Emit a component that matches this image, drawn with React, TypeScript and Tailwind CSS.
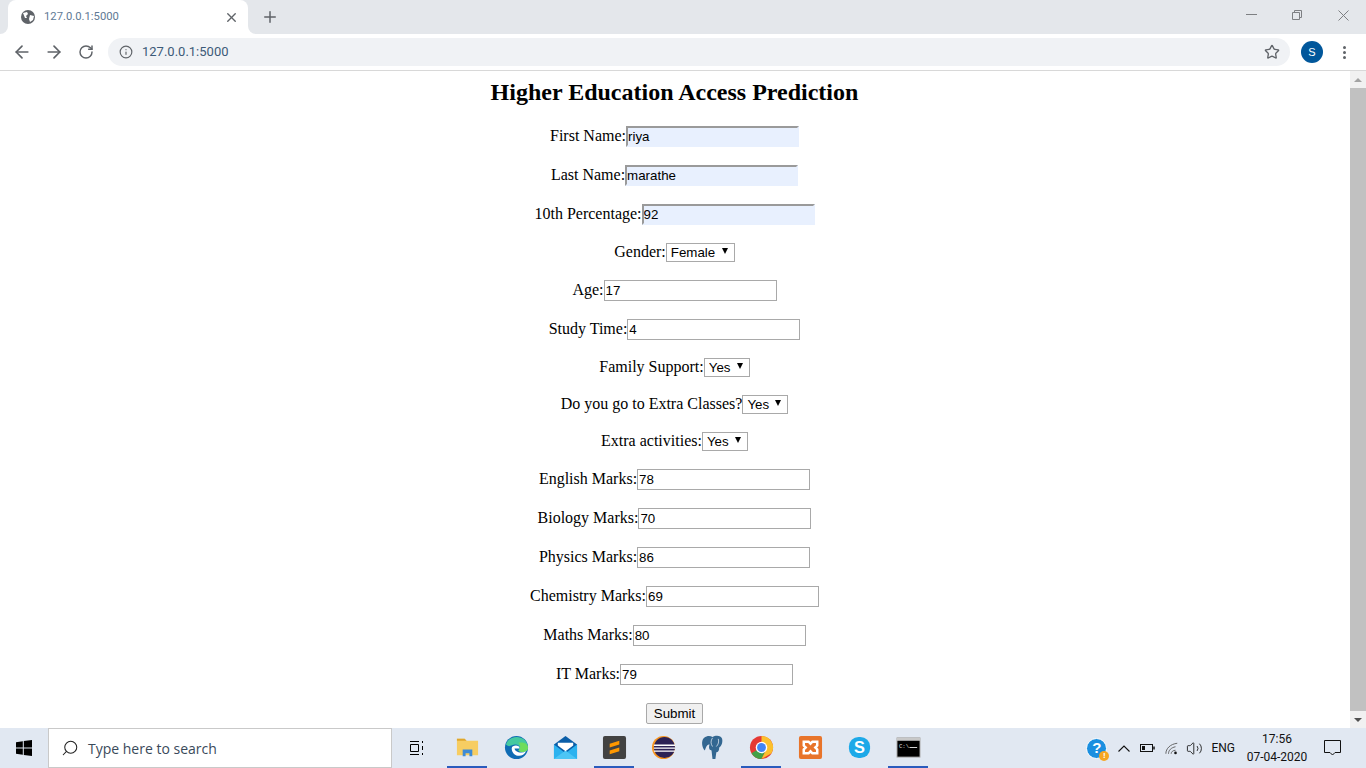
import { ArrowLeft, ArrowRight, RotateCw, Info, Star, X, Plus, Search, Volume2 } from 'lucide-react';

const formRows = [
  { label: 'First Name:', value: 'riya', kind: 'auto' },
  { label: 'Last Name:', value: 'marathe', kind: 'auto' },
  { label: '10th Percentage:', value: '92', kind: 'auto' },
  { label: 'Gender:', value: 'Female', kind: 'select' },
  { label: 'Age:', value: '17', kind: 'text' },
  { label: 'Study Time:', value: '4', kind: 'text' },
  { label: 'Family Support:', value: 'Yes', kind: 'select' },
  { label: 'Do you go to Extra Classes?', value: 'Yes', kind: 'select' },
  { label: 'Extra activities:', value: 'Yes', kind: 'select' },
  { label: 'English Marks:', value: '78', kind: 'text' },
  { label: 'Biology Marks:', value: '70', kind: 'text' },
  { label: 'Physics Marks:', value: '86', kind: 'text' },
  { label: 'Chemistry Marks:', value: '69', kind: 'text' },
  { label: 'Maths Marks:', value: '80', kind: 'text' },
  { label: 'IT Marks:', value: '79', kind: 'text' },
];

const Field = ({ kind, value }: { kind: string; value: string }) => {
  if (kind === 'select') {
    return (
      <div className="relative flex">
        <select
          defaultValue={value}
          className={`appearance-none h-[19px] pl-[4px] border border-[#a9a9a9] bg-white text-[13.33px] leading-[15px] text-black font-['Liberation_Sans',sans-serif] ${value === 'Female' ? 'w-[69px]' : 'w-[46px]'}`}
        >
          <option>{value}</option>
        </select>
        {/* dropdown arrow */}
        <span className="absolute right-[7px] top-[5px] w-0 h-0 border-x-[3px] border-x-transparent border-t-[6px] border-t-black pointer-events-none" />
      </div>
    );
  }
  const look = kind === 'auto'
    ? 'bg-[#e8f0fe] border-2 border-t-[#9a9a9a] border-l-[#9a9a9a] border-r-[#e8f0fe] border-b-[#e8f0fe] px-0'
    : 'bg-white border border-[#a9a9a9] px-[1px]';
  return (
    <input
      readOnly
      value={value}
      className={`w-[173px] h-[21px] text-[13.33px] text-black font-['Liberation_Sans',sans-serif] outline-none ${look}`}
    />
  );
};

const Logo = ({ children, active }: { children: React.ReactNode; active?: boolean }) => (
  <div className={`w-[40px] h-[40px] mr-[9px] flex items-center justify-center border-b-2 ${active ? 'border-[#2a5bbd]' : 'border-transparent'}`}>
    <svg width="25" height="25" viewBox="0 0 26 26">{children}</svg>
  </div>
);

export default function App() {
  return (
    <div className="h-screen w-full overflow-hidden flex flex-col bg-white">
      {/* tab strip */}
      <div className="h-[34px] shrink-0 bg-[#e4e7eb] flex items-end font-['Roboto','Liberation_Sans',sans-serif]">
        <div className="relative ml-2 w-[240px] h-[34px] bg-white rounded-t-lg flex items-center pl-[13px] pr-[9px]">
          {/* tab flares */}
          <div className="absolute -left-2 bottom-0 w-2 h-2 bg-white"><div className="w-full h-full bg-[#e4e7eb] rounded-br-lg" /></div>
          <div className="absolute -right-2 bottom-0 w-2 h-2 bg-white"><div className="w-full h-full bg-[#e4e7eb] rounded-bl-lg" /></div>
          <svg width="14" height="14" viewBox="0 0 14 14" className="shrink-0">
            <circle cx="7" cy="7" r="7" fill="#5f6368" />
            <path d="M2 3 L6 2 L7 4 L5 6 L6 8 L4 8 Z M9 5 L13 6 L12 10 L9 12 L8 9 Z" fill="#fff" />
          </svg>
          <span className="ml-[9px] text-[11.25px] text-[#5f7a95] flex-1">127.0.0.1:5000</span>
          <X size={15} className="text-[#5f6368]" strokeWidth={2.2} />
        </div>
        <Plus size={18} className="ml-[13px] mb-[8px] text-[#5f6368]" strokeWidth={2} />
        <div className="ml-auto flex items-center h-full text-[#7d7f82]">
          <div className="w-[46px] h-[30px] mb-[4px] flex items-center justify-center">
            <svg width="11" height="10" viewBox="0 0 11 10" fill="none" stroke="currentColor"><path d="M0 4.5h11" /></svg>
          </div>
          <div className="w-[46px] h-[30px] mb-[4px] flex items-center justify-center">
            <svg width="10" height="10" viewBox="0 0 10 10" fill="none" stroke="currentColor"><path d="M.5 2.5h7v7h-7zM2.5 2.5v-2h7v7h-2" /></svg>
          </div>
          <div className="w-[46px] h-[30px] mb-[4px] flex items-center justify-center">
            <svg width="11" height="11" viewBox="0 0 11 11" fill="none" stroke="currentColor"><path d="M.5.5l10 10M10.5.5l-10 10" /></svg>
          </div>
        </div>
      </div>

      {/* toolbar */}
      <div className="h-[37px] shrink-0 bg-white border-b border-[#d8d8d8] flex items-center">
        <ArrowLeft size={20} className="ml-[12px] text-[#5f6368]" strokeWidth={2} />
        <ArrowRight size={20} className="ml-[12px] text-[#5f6368]" strokeWidth={2} />
        <RotateCw size={16} className="ml-[14px] text-[#5f6368]" strokeWidth={2.2} />
        <div className="ml-[14px] w-[1182px] h-[28px] rounded-full bg-[#f0f2f5] flex items-center pl-[11px] pr-[10px]">
          <Info size={14} className="text-[#5f6368]" strokeWidth={2} />
          <span className="ml-[9px] text-[13px] text-[#3c5a78] font-['Roboto','Liberation_Sans',sans-serif]">127.0.0.1:5000</span>
          <Star size={16} className="ml-auto text-[#5f6368]" strokeWidth={2} />
        </div>
        <div className="ml-[11px] w-[22px] h-[22px] rounded-full bg-[#01579b] text-white text-[11px] flex items-center justify-center font-['Liberation_Sans',sans-serif]">S</div>
        <div className="ml-[20px] flex flex-col gap-[2px]">
          <span className="w-[3px] h-[3px] rounded-full bg-[#5f6368]" />
          <span className="w-[3px] h-[3px] rounded-full bg-[#5f6368]" />
          <span className="w-[3px] h-[3px] rounded-full bg-[#5f6368]" />
        </div>
      </div>

      {/* page */}
      <div className="flex-1 min-h-0 flex">
        <div className="flex-1 min-w-0 overflow-hidden pr-[1px] font-['Liberation_Serif',serif] text-[16px] text-black">
          <h1 className="mt-2 mb-5 h-[27px] leading-[27px] text-center text-[24px] font-bold">Higher Education Access Prediction</h1>
          <div className="flex flex-col gap-[18px]">
            {formRows.map((row) => (
              <div key={row.label} className={`flex justify-center items-center ${row.kind === 'select' ? 'h-[19px]' : 'h-[21px]'}`}>
                <span className="pb-[2px]">{row.label}</span>
                <Field kind={row.kind} value={row.value} />
              </div>
            ))}
            <div className="flex justify-center">
              <button className="h-[21px] w-[57px] border border-[#a9a9a9] rounded-[2px] bg-[#f0f0f0] text-[13.33px] font-['Liberation_Sans',sans-serif]">Submit</button>
            </div>
          </div>
        </div>
        {/* scrollbar */}
        <div className="w-[16px] shrink-0 bg-[#f1f1f1] flex flex-col items-center">
          <div className="h-[17px] flex items-center justify-center">
            <div className="w-0 h-0 border-x-[4px] border-x-transparent border-b-[4px] border-b-[#a3a3a3]" />
          </div>
          <div className="w-full flex-1 bg-[#c1c1c1]" />
          <div className="h-[17px] flex items-center justify-center">
            <div className="w-0 h-0 border-x-[4px] border-x-transparent border-t-[4px] border-t-[#505050]" />
          </div>
        </div>
      </div>

      {/* taskbar */}
      <div className="h-[40px] shrink-0 bg-[#e1e8f2] flex items-center font-['Open_Sans','Liberation_Sans',sans-serif]">
        <div className="w-[48px] flex justify-center">
          <svg width="16" height="16" viewBox="0 0 16 16" fill="#000"><path d="M0 2.2 6.8 1.2V7.5H0zM7.8 1 16 0V7.5H7.8zM0 8.5H6.8V14.8L0 13.8zM7.8 8.5H16V16L7.8 15z" /></svg>
        </div>
        <div className="w-[344px] h-[40px] bg-white border border-[#c9c9c9] flex items-center pl-[12px] text-[14px] text-[#3a4a5a]">
          <Search size={18} className="-scale-x-100 text-[#222]" strokeWidth={1.4} />
          <span className="ml-[9px]">Type here to search</span>
        </div>
        <div className="ml-[15px] w-[20px] flex justify-center">
          <svg width="16" height="16" viewBox="0 0 16 16" fill="none" stroke="#000" strokeWidth="1"><path d="M1 1.5h9M1 14.5h9M1.5 4.5h8v7h-8z" /><path d="M13.5 1v2M13.5 6v4M13.5 13v2" /></svg>
        </div>
        <div className="flex ml-[20px]">
          <Logo active>
            <path d="M2 4h8l2 2h12v15H2z" fill="#f7cd62" /><path d="M2 4h8l2 2H2z" fill="#dfa62e" /><path d="M8 22v-7h10v7h-3v-3h-4v3z" fill="#3e8bd6" />
          </Logo>
          <Logo>
            <circle cx="13" cy="13" r="12" fill="#0f6cb4" /><path d="M2 10C5 -1 24 -1 25 13c0 5-7 6-10 3 3-3 0-7-4-6-5 1-5 3-9 0z" fill="#45c9a0" /><path d="M25 13c0 5-7 6-10 3 3-3 2-6 0-8 5-1 10 1 10 5z" fill="#6fdc5c" /><path d="M8 14c0-4 9-4 8 0h-5c0 3 6 6 12 3-4 8-15 5-15-3z" fill="#fff" />
          </Logo>
          <Logo>
            <path d="M1 10 13 1l12 9v15H1z" fill="#0b5ea8" /><path d="M1 10l12 9 12-9v15H1z" fill="#2cb2ef" /><path d="M1 25 13 16l12 9z" fill="#4cc5f5" /><path d="M5 8h16v3l-8 6-8-6z" fill="#fff" />
          </Logo>
          <Logo active>
            <rect x="1" y="1" width="24" height="24" rx="2" fill="#424242" /><path d="M18 6v4l-10 3v-4zM18 13v4l-10 3v-4z" fill="#ff9800" />
          </Logo>
          <Logo>
            <circle cx="13" cy="13" r="12" fill="#f7941e" /><circle cx="14" cy="13" r="11" fill="#2c2255" /><path d="M3 10h22v1.4H3zM3 13h22v1.4H3zM3 16h22v1.4H3z" fill="#fff" />
          </Logo>
          <Logo>
            <path d="M4 3c4-3 7-2 9-1 3-2 9-2 10 2 1 4-1 8-3 9 0 3-1 5-3 5l-1 7h-3l-1-9c-3 0-3-4-2-6-3-1-4 4-5 6C2 13 1 6 4 3z" fill="#336791" />
            <path d="M13 3c-2 3-2 6 0 9M19 4c1 3 0 6-2 8" fill="none" stroke="#dfe7f0" strokeWidth=".8" />
          </Logo>
          <Logo active>
            <circle cx="13" cy="13" r="12" fill="#e53935" /><path d="M13 13 2.6 19A12 12 0 0 0 13 25l6-12z" fill="#43a047" /><path d="M13 1a12 12 0 0 1 10.4 18L13 25l6-12H13z" fill="#fbc02d" /><circle cx="13" cy="13" r="6" fill="#fff" /><circle cx="13" cy="13" r="4.6" fill="#4285f4" />
          </Logo>
          <Logo>
            <rect x="1" y="1" width="24" height="24" rx="2" fill="#e8742a" /><path d="M6 7h5l2 2 2-2h5v4l-2 2 2 2v4h-5l-2-2-2 2H6v-4l2-2-2-2z" fill="none" stroke="#fff" strokeWidth="2.6" />
          </Logo>
          <Logo>
            <rect x="2" y="2" width="22" height="22" rx="10" fill="#1da9e8" /><text x="13" y="19" textAnchor="middle" fontSize="17" fontWeight="700" fill="#fff" fontFamily="Liberation Sans, sans-serif">S</text>
          </Logo>
          <Logo active>
            <rect x="1" y="3" width="24" height="20" fill="#000" stroke="#b5b5b5" /><rect x="1" y="3" width="24" height="3" fill="#c8c8c8" /><path d="M14 13h8" stroke="#ddd" /><text x="3" y="13" fontSize="6" fill="#ddd" fontFamily="Liberation Mono, monospace">C:\</text>
          </Logo>
        </div>
        <div className="ml-auto flex items-center h-full text-[#111]">
          <div className="relative w-[21px] h-[21px] rounded-full bg-[#1b8fe0] border border-white text-white text-[15px] font-bold flex items-center justify-center font-['Liberation_Sans',sans-serif]">
            ?
            <span className="absolute -right-[3px] -bottom-[3px] w-[10px] h-[10px] rounded-full bg-[#f5a623] text-white text-[8px] leading-[10px] text-center">!</span>
          </div>
          <svg width="12" height="7" viewBox="0 0 12 7" fill="none" stroke="#111" strokeWidth="1.1" className="ml-[11px]"><path d="M.5 6.5 6 1l5.5 5.5" /></svg>
          <svg width="15" height="8" viewBox="0 0 15 8" fill="none" stroke="#111" className="ml-[10px]"><rect x=".5" y=".5" width="12" height="7" /><rect x="2" y="2" width="3" height="4" fill="#111" stroke="none" /><path d="M14 2.5v3" strokeWidth="1.5" /></svg>
          <svg width="14" height="13" viewBox="0 0 16 14" fill="none" stroke="#555" className="ml-[10px]"><path d="M1 13C1 7 6 2 14 1M4 13c0-4 3-7 8-8M7 13c0-2 2-4 5-4" /><circle cx="12" cy="12" r="1.5" fill="#111" stroke="none" /></svg>
          <Volume2 size={17} className="ml-[7px]" strokeWidth={1.2} />
          <span className="ml-[8px] text-[12px] font-['Roboto','Liberation_Sans',sans-serif]">ENG</span>
          <div className="ml-[11px] w-[62px] flex flex-col items-center text-[12px] leading-[18px] font-['Roboto','Liberation_Sans',sans-serif]">
            <span>17:56</span>
            <span>07-04-2020</span>
          </div>
          <svg width="17" height="16" viewBox="0 0 17 16" fill="none" stroke="#111" className="ml-[16px] mr-[25px]"><path d="M.5.5h16v12h-5.5l-2.5 2.5-2.5-2.5H.5z" /></svg>
        </div>
      </div>
    </div>
  );
}
